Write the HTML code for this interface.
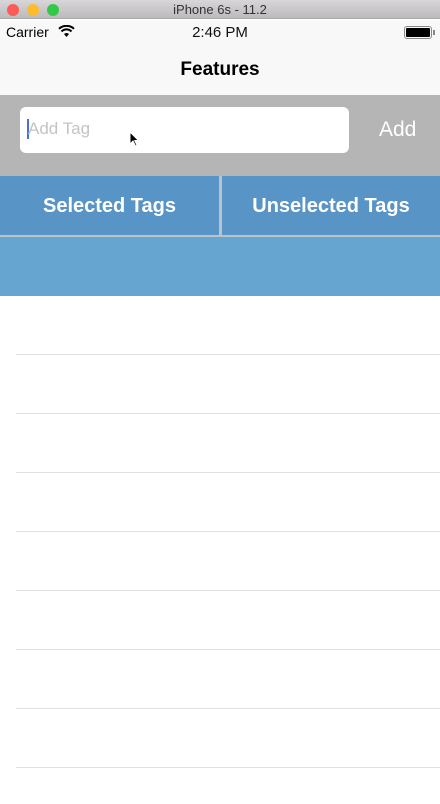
<!DOCTYPE html>
<html><head><style>
body{margin:0;width:440px;height:804px;overflow:hidden;background:#fff;font-family:"Liberation Sans",sans-serif;position:relative}
div{position:absolute;box-sizing:border-box}
.sep{left:16px;right:0;height:1px;background:#e0e0e0}
</style></head><body>
<div style="left:0;top:0;width:440px;height:19px;background:linear-gradient(#d8d6d8,#bcbabc);border-bottom:1px solid #a8a8a8;text-align:center;font-size:13px;line-height:19px;color:#333">iPhone 6s - 11.2</div>
<div style="left:7px;top:4px;width:12px;height:12px;border-radius:50%;background:#fc5b57"></div>
<div style="left:27px;top:4px;width:12px;height:12px;border-radius:50%;background:#fdbc2e"></div>
<div style="left:47px;top:4px;width:12px;height:12px;border-radius:50%;background:#34c84a"></div>
<div style="left:0;top:20px;width:440px;height:75px;background:#f8f8f8"></div>
<div style="left:6px;top:24px;font-size:14px;color:#000">Carrier</div>
<svg style="position:absolute;left:58px;top:25px" width="17" height="13" viewBox="0 0 17 13"><path d="M8.5 12 L6 9 A4 4 0 0 1 11 9 Z" fill="#000"/><path d="M3.5 6.5 A7 7 0 0 1 13.5 6.5" stroke="#000" stroke-width="2" fill="none"/><path d="M1 3.8 A11 11 0 0 1 16 3.8" stroke="#000" stroke-width="2" fill="none"/></svg>
<div style="left:0;width:440px;top:24px;text-align:center;font-size:15px;color:#111">2:46 PM</div>
<div style="left:404px;top:26px;width:28px;height:13px;border:1px solid #888;border-radius:3px;padding:1px"><div style="position:static;background:#000;height:9px;border-radius:1px"></div></div>
<div style="left:433px;top:30px;width:2px;height:5px;background:#888"></div>
<div style="left:0;width:440px;top:59px;text-align:center;font-size:19px;font-weight:bold;color:#000">Features</div>
<div style="left:0;top:95px;width:440px;height:81px;background:#b5b5b5"></div>
<div style="left:20px;top:107px;width:329px;height:46px;background:#fff;border-radius:6px"></div>
<div style="left:27px;top:119px;width:2px;height:20px;background:#4a6fd8"></div>
<div style="left:28px;top:119px;font-size:17px;color:#c4c4c4">Add Tag</div>
<div style="left:379px;top:118px;font-size:21px;color:#fff">Add</div>
<div style="left:0;top:176px;width:219px;height:59px;background:#5894c6;color:#fff;font-size:20px;font-weight:bold;text-align:center;line-height:61px">Selected Tags</div>
<div style="left:219px;top:176px;width:3px;height:59px;background:#b8c4cc"></div>
<div style="left:222px;top:176px;width:218px;height:59px;background:#5894c6;color:#fff;font-size:20px;font-weight:bold;text-align:center;line-height:61px">Unselected Tags</div>
<div style="left:0;top:235px;width:440px;height:2px;background:#b8c4cc"></div>
<div style="left:0;top:237px;width:440px;height:59px;background:#67a5d1"></div>
<div class="sep" style="top:354px"></div>
<div class="sep" style="top:413px"></div>
<div class="sep" style="top:472px"></div>
<div class="sep" style="top:531px"></div>
<div class="sep" style="top:590px"></div>
<div class="sep" style="top:649px"></div>
<div class="sep" style="top:708px"></div>
<div class="sep" style="top:767px"></div>
<svg style="position:absolute;left:129px;top:131px" width="11" height="17" viewBox="0 0 11 17"><path d="M1 1 L1 13 L4 10 L6.5 15 L8 14.3 L5.7 9.5 L9.5 9.5 Z" fill="#000" stroke="#fff" stroke-width="1"/></svg>
</body></html>
